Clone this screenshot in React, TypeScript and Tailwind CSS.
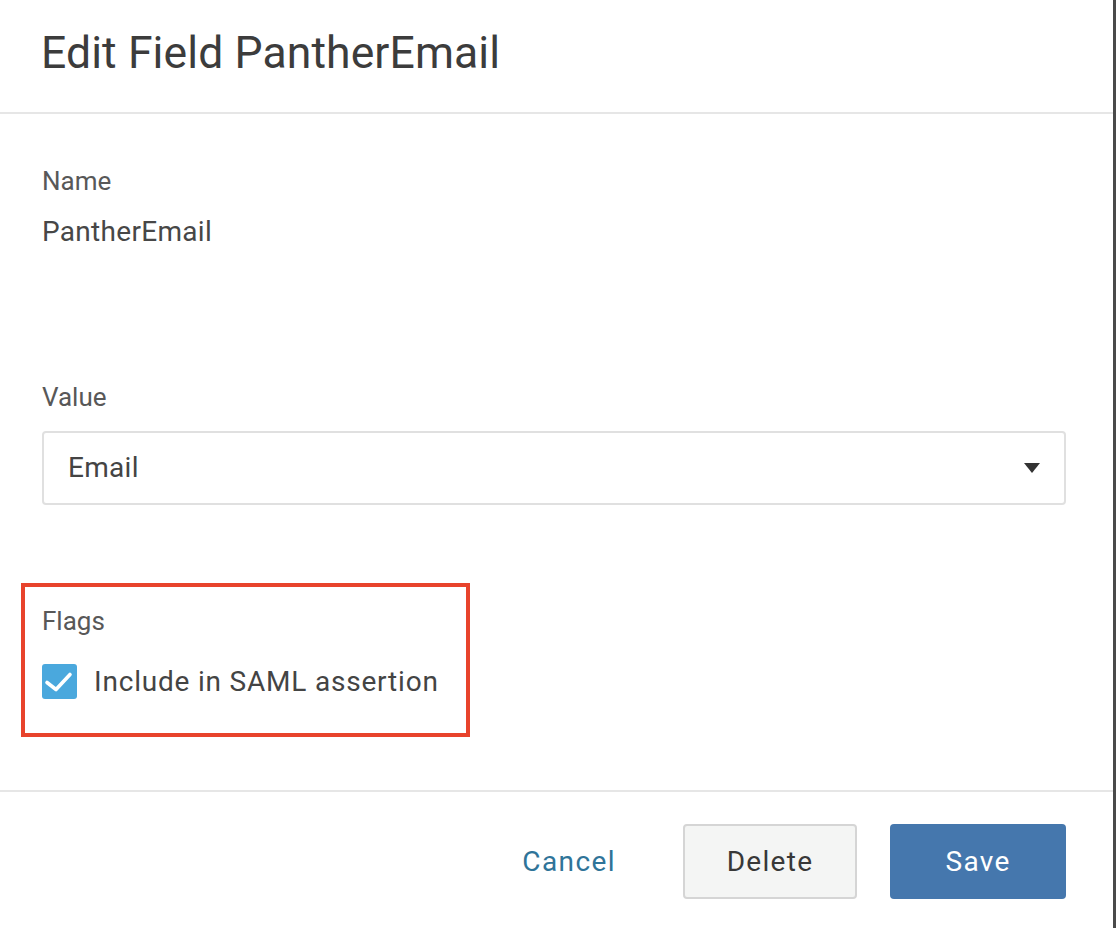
import React from "react";

export default function App() {
  const font = { fontFamily: "Roboto, 'Liberation Sans', sans-serif" };
  return (
    <div className="flex h-[928px] w-[1116px] bg-white" style={font}>
      <div className="flex w-[1113px] flex-col bg-white">
        {/* Header */}
        <div className="h-[112px] pl-[41px] pt-[31px]">
          <h1 className="text-[44.5px] leading-[44px] tracking-[0.1px] font-normal text-[#3c3c3c]">Edit Field PantherEmail</h1>
        </div>
        <div className="h-[2px] bg-[#e6e6e6]" />

        {/* Body */}
        <div className="flex h-[676px] flex-col pl-[42px] pr-[47px] pt-[54px]">
          <div className="text-[26px] leading-[26px] text-[#585858]">Name</div>
          <div className="mt-[24px] text-[28px] leading-[28px] tracking-[0.3px] text-[#474747]">PantherEmail</div>

          <div className="mt-[138px] text-[26px] leading-[26px] text-[#585858]">Value</div>
          <div className="mt-[21px] flex h-[74px] items-center justify-between rounded-[4px] border-2 border-[#e0e0e0] bg-white pl-[24px] pr-[24px]">
            <span className="text-[28px] leading-[28px] tracking-[0.3px] text-[#444444]">Email</span>
            <svg width="16" height="10" viewBox="0 0 16 10">
              <polygon points="0,0 16,0 8,10" fill="#333333" />
            </svg>
          </div>

          <div className="relative mt-[103px] w-[420px]">
            <div className="pointer-events-none absolute left-[-21px] top-[-25px] h-[154px] w-[449px] border-[4px] border-[#e8432c]" />
            <div className="text-[26px] leading-[26px] text-[#585858]">Flags</div>
            <div className="mt-[30px] flex items-center">
              <div className="flex h-[35px] w-[35px] items-center justify-center rounded-[3px] bg-[#4aa8dd]">
                <svg width="35" height="35" viewBox="0 0 35 35">
                  <polyline
                    points="5,18.5 14,25.5 28,10.5"
                    fill="none"
                    stroke="#ffffff"
                    strokeWidth="3.6"
                    strokeLinecap="round"
                    strokeLinejoin="round"
                  />
                </svg>
              </div>
              <span className="ml-[17px] text-[28px] leading-[35px] tracking-[0.8px] text-[#444444]">
                Include in SAML assertion
              </span>
            </div>
          </div>
        </div>

        <div className="h-[2px] bg-[#e6e6e6]" />

        {/* Footer */}
        <div className="flex flex-1 items-start justify-end pr-[47px] pt-[32px]">
          <button className="mr-[67px] mt-[13px] text-[28px] leading-[50px] tracking-[1.4px] text-[#2f7499]">
            Cancel
          </button>
          <button className="flex h-[75px] w-[174px] items-center justify-center rounded-[4px] border-2 border-[#d5d5d5] bg-[#f4f5f4] text-[28px] tracking-[1.3px] text-[#383838]">
            Delete
          </button>
          <button className="ml-[33px] flex h-[75px] w-[176px] items-center justify-center rounded-[4px] bg-[#4577ad] text-[28px] font-normal tracking-[1.3px] text-white">
            Save
          </button>
        </div>
      </div>
      <div className="h-full w-[3px] bg-[#4a4a4a]" />
    </div>
  );
}
